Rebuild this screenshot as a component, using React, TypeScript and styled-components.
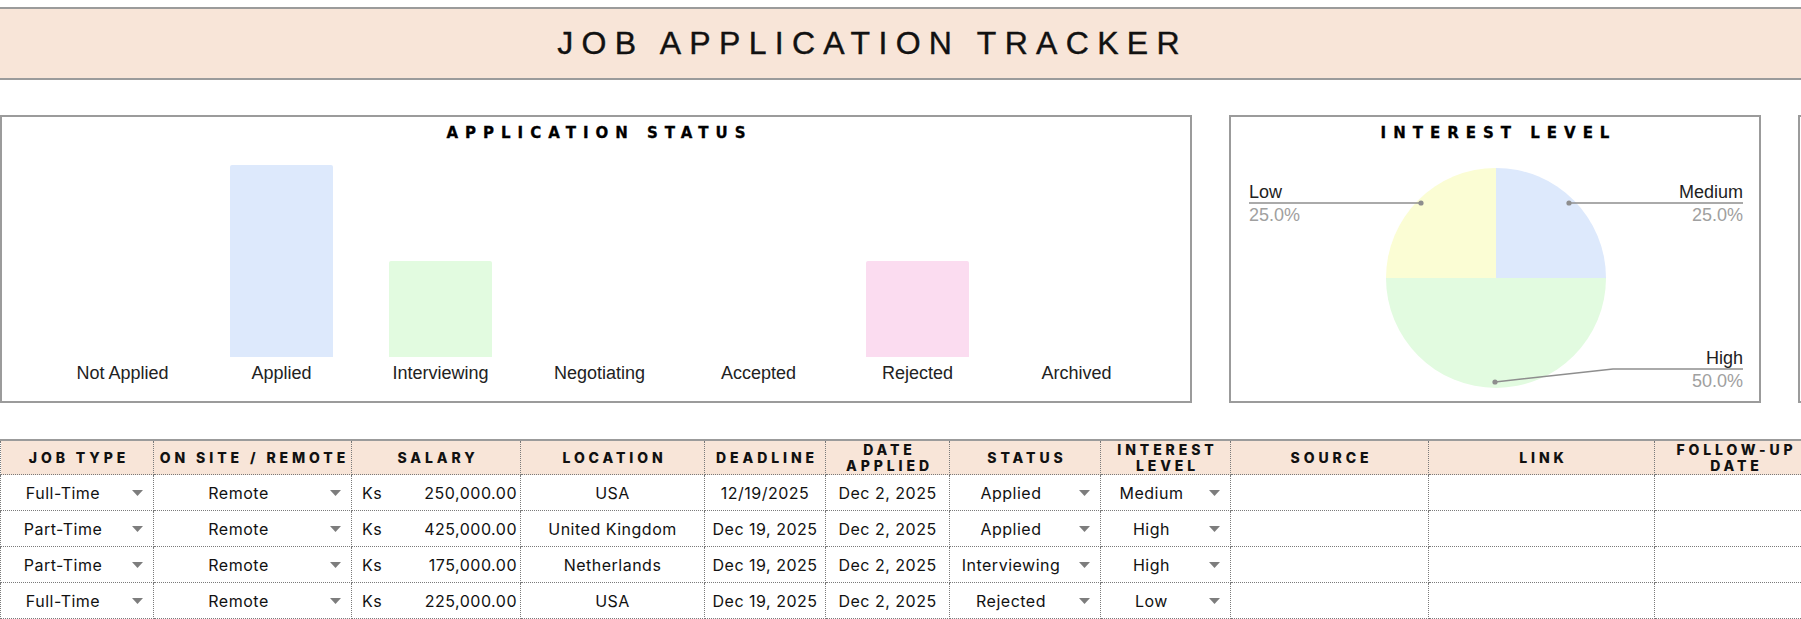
import React from "react";
import styled, { createGlobalStyle } from "styled-components";

const GlobalStyle = createGlobalStyle`
  html, body {
    margin: 0;
    padding: 0;
    background: #ffffff;
  }
  body {
    width: 1801px;
    height: 619px;
    overflow: hidden;
    font-family: "Liberation Sans", Arial, sans-serif;
  }
`;

const statusData = [
  { label: "Not Applied", count: 0, color: "#dde9fc" },
  { label: "Applied", count: 2, color: "#dde9fc" },
  { label: "Interviewing", count: 1, color: "#e2fbe0" },
  { label: "Negotiating", count: 0, color: "#e2fbe0" },
  { label: "Accepted", count: 0, color: "#e2fbe0" },
  { label: "Rejected", count: 1, color: "#fbdcf0" },
  { label: "Archived", count: 0, color: "#eeeeee" },
];

const columns = [
  { title: "JOB TYPE", width: 153 },
  { title: "ON SITE / REMOTE", width: 198 },
  { title: "SALARY", width: 169 },
  { title: "LOCATION", width: 184 },
  { title: "DEADLINE", width: 121 },
  { title: "DATE\nAPPLIED", width: 124 },
  { title: "STATUS", width: 151 },
  { title: "INTEREST\nLEVEL", width: 130 },
  { title: "SOURCE", width: 198 },
  { title: "LINK", width: 226 },
  { title: "FOLLOW-UP\nDATE", width: 160 },
];

const rows = [
  { type: "Full-Time", site: "Remote", salary: "250,000.00", location: "USA", deadline: "12/19/2025", applied: "Dec 2, 2025", status: "Applied", interest: "Medium" },
  { type: "Part-Time", site: "Remote", salary: "425,000.00", location: "United Kingdom", deadline: "Dec 19, 2025", applied: "Dec 2, 2025", status: "Applied", interest: "High" },
  { type: "Part-Time", site: "Remote", salary: "175,000.00", location: "Netherlands", deadline: "Dec 19, 2025", applied: "Dec 2, 2025", status: "Interviewing", interest: "High" },
  { type: "Full-Time", site: "Remote", salary: "225,000.00", location: "USA", deadline: "Dec 19, 2025", applied: "Dec 2, 2025", status: "Rejected", interest: "Low" },
];

const MAX_BAR = 192;

const App = () => {
  return (
    <Page>
      <GlobalStyle />
      <TitleBand>
        <Title>JOB APPLICATION TRACKER</Title>
      </TitleBand>

      <ChartRow>
        <ChartCard $width={1192}>
          <ChartTitle>APPLICATION STATUS</ChartTitle>
          <Plot>
            {statusData.map((s) => (
              <BarSlot key={s.label}>
                <Bar $h={(s.count / 2) * MAX_BAR} $color={s.color} />
                <BarLabel>{s.label}</BarLabel>
              </BarSlot>
            ))}
          </Plot>
        </ChartCard>

        <ChartCard $width={532}>
          <ChartTitle>INTEREST LEVEL</ChartTitle>
          <PieSvg viewBox="0 0 528 260" width={528} height={260}>
            <path d="M265,137 L265,27 A110,110 0 0 1 375,137 Z" fill="#dde9fc" />
            <path d="M265,137 L375,137 A110,110 0 0 1 155,137 Z" fill="#e2fbe0" />
            <path d="M265,137 L155,137 A110,110 0 0 1 265,27 Z" fill="#fbfdd4" />

            <line x1={18} y1={62} x2={190} y2={62} stroke="#8e8e8e" strokeWidth={1.5} />
            <circle cx={190} cy={62} r={2.6} fill="#8e8e8e" />
            <text x={18} y={57} fontSize={18} fill="#222">Low</text>
            <text x={18} y={80} fontSize={18} fill="#a0a0a0">25.0%</text>

            <line x1={338} y1={62} x2={512} y2={62} stroke="#8e8e8e" strokeWidth={1.5} />
            <circle cx={338} cy={62} r={2.6} fill="#8e8e8e" />
            <text x={512} y={57} fontSize={18} fill="#222" textAnchor="end">Medium</text>
            <text x={512} y={80} fontSize={18} fill="#a0a0a0" textAnchor="end">25.0%</text>

            <polyline points="264,241 382,228 512,228" fill="none" stroke="#8e8e8e" strokeWidth={1.5} />
            <circle cx={264} cy={241} r={2.6} fill="#8e8e8e" />
            <text x={512} y={223} fontSize={18} fill="#222" textAnchor="end">High</text>
            <text x={512} y={246} fontSize={18} fill="#a0a0a0" textAnchor="end">50.0%</text>
          </PieSvg>
        </ChartCard>

        <ChartCard $width={300} />
      </ChartRow>

      <Sheet>
        <colgroup>
          {columns.map((c) => (
            <col key={c.title} style={{ width: c.width }} />
          ))}
        </colgroup>
        <thead>
          <tr>
            {columns.map((c) => (
              <HeadCell key={c.title}>{c.title}</HeadCell>
            ))}
          </tr>
        </thead>
        <tbody>
          {rows.map((r, i) => (
            <tr key={i}>
              <Cell>
                <Dropdown value={r.type} />
              </Cell>
              <Cell>
                <Dropdown value={r.site} />
              </Cell>
              <Cell>
                <Money>
                  <span>Ks</span>
                  <span>{r.salary}</span>
                </Money>
              </Cell>
              <Cell>{r.location}</Cell>
              <Cell>{r.deadline}</Cell>
              <Cell>{r.applied}</Cell>
              <Cell>
                <Dropdown value={r.status} />
              </Cell>
              <Cell>
                <Dropdown value={r.interest} />
              </Cell>
              <Cell />
              <Cell />
              <Cell />
            </tr>
          ))}
        </tbody>
      </Sheet>
    </Page>
  );
};

const Dropdown = ({ value }: { value: string }) => (
  <DropWrap>
    <DropValue>{value}</DropValue>
    <Caret viewBox="0 0 11 6" width={11} height={6}>
      <path d="M0,0 L11,0 L5.5,6 Z" fill="#7d7d7d" />
    </Caret>
  </DropWrap>
);

const Page = styled.div`
  width: 1801px;
  padding-top: 7px;
  overflow: hidden;
`;

const TitleBand = styled.div`
  box-sizing: border-box;
  height: 73px;
  width: 100%;
  background: #f8e5d8;
  border-top: 2px solid #9b9b9b;
  border-bottom: 2px solid #9b9b9b;
  display: flex;
  align-items: center;
  justify-content: center;
  padding-right: 56px;
`;

const Title = styled.h1`
  margin: 0;
  font-family: "Liberation Sans", "DejaVu Sans", sans-serif;
  font-weight: 400;
  font-size: 32px;
  letter-spacing: 8.3px;
  color: #111;
  -webkit-text-stroke: 0.4px #111;
`;

const ChartRow = styled.div`
  display: flex;
  gap: 37px;
  margin-top: 35px;
  height: 288px;
`;

const ChartCard = styled.div<{ $width: number }>`
  box-sizing: border-box;
  flex-shrink: 0;
  width: ${(p) => p.$width}px;
  height: 288px;
  border: 2px solid #9b9b9b;
  background: #ffffff;
  display: flex;
  flex-direction: column;
`;

const ChartTitle = styled.div`
  margin-top: 8px;
  height: 16px;
  line-height: 16px;
  text-align: center;
  padding-left: 7px;
  font-family: "DejaVu Sans", sans-serif;
  font-weight: 700;
  font-size: 15px;
  letter-spacing: 7px;
  color: #000;
  -webkit-text-stroke: 0.3px #000;
`;

const Plot = styled.div`
  flex: 1;
  display: grid;
  grid-template-columns: repeat(7, 159px);
  align-items: end;
  padding: 0 0 18px 41px;
`;

const BarSlot = styled.div`
  display: flex;
  flex-direction: column;
  align-items: center;
`;

const Bar = styled.div<{ $h: number; $color: string }>`
  width: 103px;
  height: ${(p) => p.$h}px;
  background: ${(p) => p.$color};
  border-radius: 2px 2px 0 0;
`;

const BarLabel = styled.div`
  margin-top: 6px;
  height: 20px;
  line-height: 20px;
  font-family: "Liberation Sans", Arial, sans-serif;
  font-size: 18px;
  color: #222;
  white-space: nowrap;
`;

const PieSvg = styled.svg`
  display: block;
  font-family: "Liberation Sans", Arial, sans-serif;
`;

const Sheet = styled.table`
  margin-top: 36px;
  border-collapse: collapse;
  table-layout: fixed;
  width: 1814px;
  border-top: 2px solid #9b9b9b;
`;

const HeadCell = styled.th`
  height: 33px;
  padding: 0 0 0 4px;
  background: #f8e5d8;
  border: 1px dotted #7a7a7a;
  border-top: 2px solid #9b9b9b;
  font-family: Inter, "Open Sans", sans-serif;
  font-weight: 800;
  font-size: 14px;
  letter-spacing: 3.9px;
  line-height: 16px;
  white-space: pre-line;
  text-align: center;
  color: #111;
`;

const Cell = styled.td`
  height: 35px;
  padding: 0;
  border: 1px dotted #7a7a7a;
  font-family: Inter, "Open Sans", sans-serif;
  font-size: 16px;
  letter-spacing: 0.5px;
  color: #111;
  text-align: center;
  white-space: nowrap;
`;

const DropWrap = styled.div`
  display: flex;
  align-items: center;
  padding-right: 10px;
`;

const DropValue = styled.span`
  flex: 1;
  text-align: center;
  margin-right: 7px;
`;

const Caret = styled.svg`
  flex-shrink: 0;
  display: block;
`;

const Money = styled.div`
  display: flex;
  justify-content: space-between;
  padding: 0 3px 0 10px;
`;

export default App;
